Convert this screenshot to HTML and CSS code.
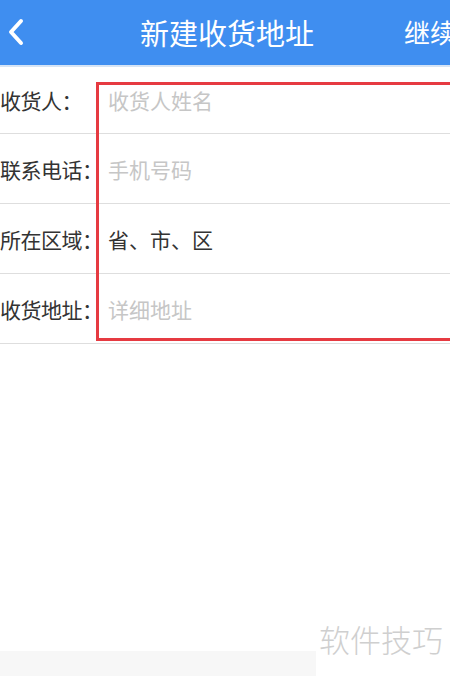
FILE: index.html
```html
<!DOCTYPE html>
<html lang="zh">
<head>
<meta charset="utf-8">
<link rel="stylesheet" href="styles.css">
</head>
<body>
<div class="page">
  <header class="topbar">
    <svg class="back" width="20" height="30" viewBox="0 0 20 30"><polyline points="15,4 5,15 15,26" fill="none" stroke="#fff" stroke-width="4" stroke-linecap="round" stroke-linejoin="round"/></svg>
    <div class="title">新建收货地址</div>
    <div class="next">继续</div>
  </header>
  <div class="form">
    <div class="row r1"><span class="label">收货人：</span><span class="ph">收货人姓名</span></div>
    <div class="row"><span class="label">联系电话：</span><span class="ph">手机号码</span></div>
    <div class="row"><span class="label">所在区域：</span><span class="val">省、市、区</span></div>
    <div class="row"><span class="label">收货地址：</span><span class="ph">详细地址</span></div>
    <div class="mark"></div>
  </div>
  <div class="spacer"></div>
  <footer class="foot">
    <div class="band"></div>
    <div class="wm">软件技巧</div>
  </footer>
</div>
</body>
</html>
```
FILE: styles.css
```css
html, body { margin: 0; padding: 0; }
body {
  width: 450px; height: 676px; overflow: hidden; background: #fff;
  font-family: "Noto Sans CJK SC", "Noto Sans", sans-serif;
}
.page { display: flex; flex-direction: column; height: 676px; }
.topbar {
  height: 65px; background: #3f8ef0; border-bottom: 2px solid #d6e4f5;
  display: flex; align-items: center; position: relative; overflow: hidden;
}
.back { margin-left: 6px; margin-top: -2px; }
.title {
  position: absolute; left: 4px; right: 0; text-align: center;
  color: #fff; font-size: 29px; line-height: 32px; top: 16px;
}
.next {
  position: absolute; left: 404px; top: 17px; color: #fff;
  font-size: 26px; line-height: 30px; white-space: nowrap;
}
.form { position: relative; }
.row {
  height: 69px; border-bottom: 1px solid #dedede;
  display: flex; align-items: center; font-size: 21px;
}
.row.r1 { height: 66px; }
.label { width: 108px; color: #333; white-space: nowrap; letter-spacing: -0.5px; }
.ph { color: #c6c6c6; }
.val { color: #333; }
.mark {
  position: absolute; left: 96px; top: 15px; width: 360px; height: 259px;
  border: 3px solid #e63a41; box-sizing: border-box;
}
.spacer { flex: 1; }
.foot { height: 60px; display: flex; align-items: flex-end; position: relative; }
.band { width: 316px; height: 25px; background: #f7f7f7; }
.wm {
  position: absolute; left: 319px; top: 5px; font-size: 31px; line-height: 36px;
  color: #cfcfcf; font-weight: 300; white-space: nowrap;
}
```
